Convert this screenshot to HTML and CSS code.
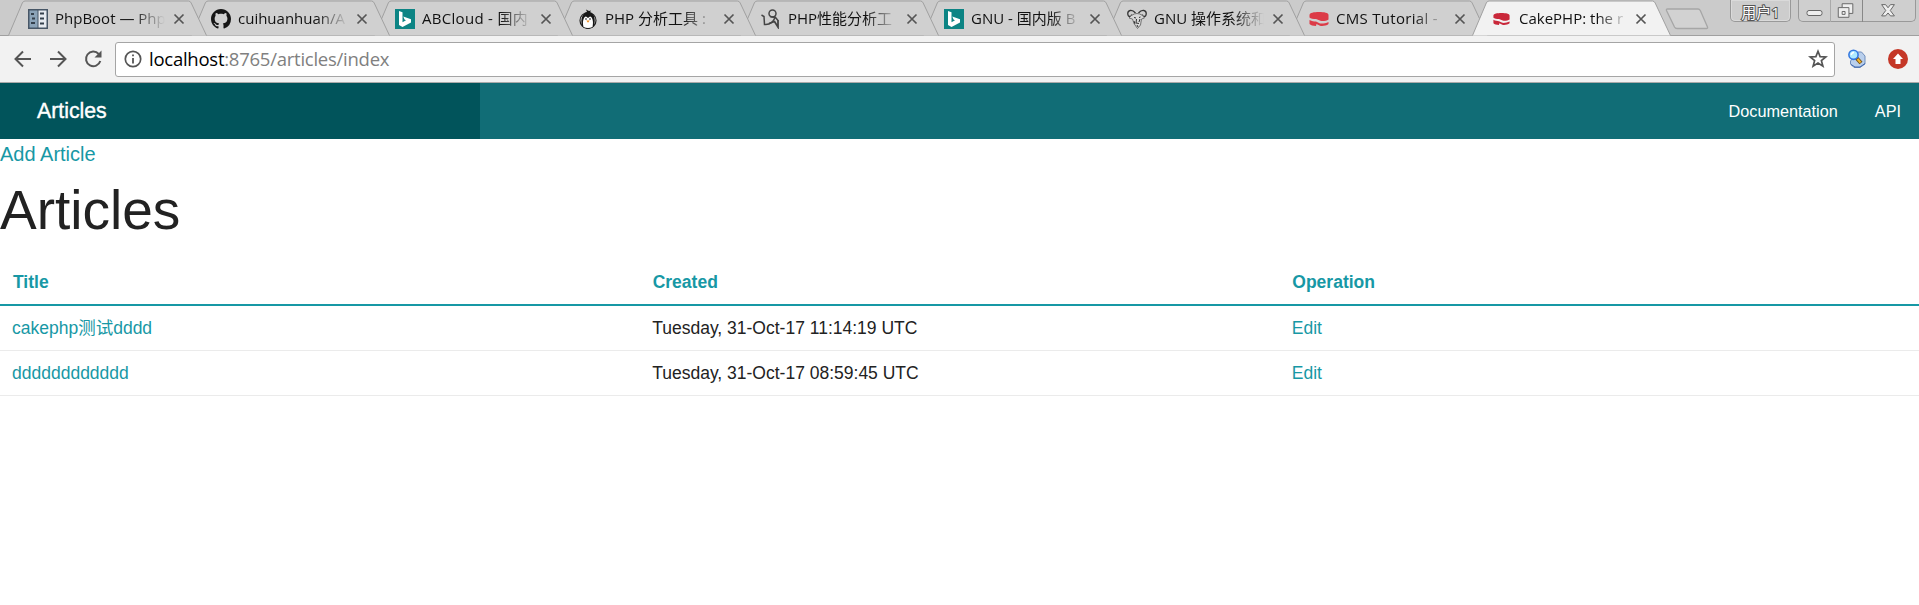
FILE: index.html
```html
<!DOCTYPE html>
<html lang="en">
<head>
<meta charset="utf-8">
<title>CakePHP: the rapid development php framework</title>
<link rel="stylesheet" href="styles.css">
</head>
<body>
<svg class="defs" width="0" height="0" aria-hidden="true">
  <symbol id="shape" viewBox="0 0 199 36"><path d="M.5 35.5 14.3 3Q15.2 1 17 1H180.500Q182.300 1 183.200 3L198.500 35.500" stroke="#a0a0a0"/></symbol>
  <symbol id="close" viewBox="0 0 12 12"><path d="M1.500 1.500 10.500 10.500M10.500 1.500 1.500 10.500" fill="none" stroke="#555" stroke-width="1.700"/></symbol>
  <symbol id="bing" viewBox="0 0 20 20"><path fill="#0c8484" d="M0 0H20V20H0Z"/><path fill="#fff" d="M4 2 7.500 3.300V13.300L11 11.300 9.500 10.500 8.300 7.500 16 10.300V13.500L7.500 18 4 16Z"/></symbol>
  <symbol id="cake" viewBox="0 0 20 16"><path d="M.5 4C.5 1.800 5 1 10 1S19.500 1.800 19.500 4V8.500C17.500 10 13.500 10.300 11.500 9.800L7 8C4.500 8 1.500 7.500 .5 6.500ZM.5 9C3 10.300 5 10.500 7 10.500L11 12.500C13.500 12.800 17 12.200 19.500 11V13C17.500 15 12.500 15.300 11 14.700L7.500 13 7 15C4 14.800 1.500 14.300 .5 13Z"/></symbol>
</svg>

<header class="tabstrip">
  <div class="tabs">
    <div class="tab"><svg class="shape"><use href="#shape"/></svg><div class="inner">
      <svg class="fav" viewBox="0 0 20 20"><path fill="#475666" d="M0 0H20V20H0Z"/><path fill="#8ba3b8" d="M1.500 1.500H9.500V18.500H1.500Z"/><path fill="#e6eaf0" d="M10.500 1.500H18.500V18.500H10.500Z"/><path d="M3 5H6M4 9.500H7M3 14H7M12 4.500H16M12 9.500H16M12 14.500H16" stroke="#34404c" stroke-width="2"/></svg>
      <span class="title">PhpBoot — Php</span><svg class="x"><use href="#close"/></svg></div></div>
    <div class="tab"><svg class="shape"><use href="#shape"/></svg><div class="inner">
      <svg class="fav" viewBox="0 0 16 16"><path fill="#161616" fill-rule="evenodd" d="M8 0C3.580 0 0 3.580 0 8c0 3.540 2.290 6.530 5.470 7.590.4.070.55-.17.55-.38 0-.19-.01-.82-.01-1.490-2.010.37-2.530-.49-2.690-.94-.09-.23-.48-.94-.82-1.130-.28-.15-.68-.52-.01-.53.63-.01 1.080.58 1.230.82.72 1.210 1.870.87 2.330.66.070-.52.28-.87.51-1.070-1.780-.2-3.640-.89-3.640-3.950 0-.87.31-1.590.82-2.150-.08-.2-.36-1.020.08-2.120 0 0 .67-.21 2.200.82.64-.18 1.320-.27 2-.27s1.360.09 2 .27c1.530-1.040 2.200-.82 2.200-.82.44 1.100.16 1.920.08 2.120.51.56.82 1.270.82 2.150 0 3.070-1.870 3.750-3.650 3.950.29.25.54.73.54 1.480 0 1.070-.01 1.930-.01 2.200 0 .21.15.46.55.38A8.010 8.010 0 0 0 16 8c0-4.420-3.580-8-8-8z"/></svg>
      <span class="title">cuihuanhuan/A</span><svg class="x"><use href="#close"/></svg></div></div>
    <div class="tab late"><svg class="shape"><use href="#shape"/></svg><div class="inner">
      <svg class="fav"><use href="#bing"/></svg>
      <span class="title wide">ABCloud - 国内</span><svg class="x"><use href="#close"/></svg></div></div>
    <div class="tab late"><svg class="shape"><use href="#shape"/></svg><div class="inner">
      <svg class="fav" viewBox="0 0 20 20"><circle cx="10" cy="11.500" r="8" fill="#eee" stroke="#222" stroke-width="1.200"/><path fill="#161616" d="M4 17C2 9 5 4 9 3L8 .5 11 2 13 1.500 12 3.200C16 4 18 10 16 17L14 19H6Z"/><path fill="#fff" d="M5.500 18C4 12 6 7.500 8 7.500L10 9 12 7.500C14 7.500 16 12 14.500 18Q10 20 5.500 18Z"/><circle cx="8" cy="10" r=".8"/><circle cx="12" cy="10" r=".8"/><path fill="#f28c1b" d="M8.300 11.500H11.700L10 13.800Z"/></svg>
      <span class="title">PHP 分析工具 :</span><svg class="x"><use href="#close"/></svg></div></div>
    <div class="tab late"><svg class="shape"><use href="#shape"/></svg><div class="inner">
      <svg class="fav" viewBox="0 0 20 20" fill="none" stroke="#444" stroke-width="1.500"><circle cx="11.500" cy="4.500" r="3.500"/><path d="M.5 6 3 7.500 3.500 15.500C8 16 12 14 14.500 7.500M9 7.500 14.500 8.500 17 11.500"/><path d="M8 14.500 13.500 12.500 17 18V11" stroke-width="1.800"/></svg>
      <span class="title">PHP性能分析工</span><svg class="x"><use href="#close"/></svg></div></div>
    <div class="tab late"><svg class="shape"><use href="#shape"/></svg><div class="inner">
      <svg class="fav"><use href="#bing"/></svg>
      <span class="title">GNU - 国内版 B</span><svg class="x"><use href="#close"/></svg></div></div>
    <div class="tab late"><svg class="shape"><use href="#shape"/></svg><div class="inner">
      <svg class="fav" viewBox="0 0 20 20" fill="none" stroke="#333" stroke-width="1.300"><path d="M8.500 4C5 0 .5 1 .8 5 1 8.500 5 8 4.500 5.500M11.500 4C15 0 19.500 1 19.200 5 19 8.500 15 8 15.500 5.500"/><path fill="#d8d8d8" stroke="#666" stroke-width=".9" d="M4.500 6.500Q10 2.500 15.500 6.500L17.500 9 14.500 10 13.500 16 10.500 19.500 7 14.500 5.500 10 2 9Z"/><path stroke-width="1" d="M7 8.500 9 9M12 8.500 13.500 8M9.500 10 9 14 12 14.500M10 16 11 18M7 12 8 15M13 10 12 13"/></svg>
      <span class="title">GNU 操作系统和</span><svg class="x"><use href="#close"/></svg></div></div>
    <div class="tab"><svg class="shape"><use href="#shape"/></svg><div class="inner">
      <svg class="fav cake"><use href="#cake"/></svg>
      <span class="title wide">CMS Tutorial -</span><svg class="x"><use href="#close"/></svg></div></div>
    <div class="tab active"><svg class="shape"><use href="#shape"/></svg><div class="inner">
      <svg class="fav cake small"><use href="#cake" width="17" height="14"/></svg>
      <span class="title">CakePHP: the r</span><svg class="x"><use href="#close"/></svg></div></div>
  </div>
  <svg class="newtab" viewBox="0 0 44 22"><path d="M2.500 1H33Q34.500 1 35.300 2.500L42.500 19Q43 20.500 41.500 20.500H12Q10.300 20.500 9.500 19L1.500 2.500Q1 1 2.500 1Z" fill="#d2d2d2" stroke="#a6a6a6" stroke-width="1.300"/></svg>
  <div class="user">用户1</div>
  <div class="controls">
    <svg class="min" viewBox="0 0 31 22"><rect x="8" y="10.500" width="15" height="5" rx="2" fill="#eee" stroke="#666"/></svg>
    <svg class="max" viewBox="0 0 32 22"><path d="M11.500 3.500H22.500V13.500H18.500V17.500H7.500V7.500H11.500Z" fill="#eee" stroke="#666"/><path d="M11.500 7.500H18.500V13.500M11.500 11.500H14.500V14.500H11.500Z" fill="none" stroke="#666"/></svg>
    <svg class="end" viewBox="0 0 53 22"><path d="M19 4.500H23L25.500 7.700 28 4.500H32L27.800 10.500 32 16H28L25.500 13 23 16H19L23.200 10.500Z" fill="#eee" stroke="#666"/></svg>
  </div>
</header>

<div class="toolbar">
  <svg class="nav" viewBox="0 0 20 20"><path d="M18 10H3M10 2.500 2.500 10 10 17.500"/></svg>
  <svg class="nav" viewBox="0 0 20 20"><path d="M2 10H17M10 2.500 17.500 10 10 17.500"/></svg>
  <svg class="nav" viewBox="0 0 20 20"><path d="M15.700 5A7.300 7.300 0 1 0 17.300 12"/><path class="solid" d="M18.500 1.500V8.500H11.500Z"/></svg>
  <div class="omnibox">
    <svg class="info" viewBox="0 0 18 18"><circle cx="9" cy="9" r="7.700" fill="none" stroke="#555" stroke-width="1.700"/><path d="M9 8V13.500M9 4.500V6.300" stroke="#555" stroke-width="1.800"/></svg>
    <span class="url"><b>localhost</b>:8765/articles/index</span>
    <svg class="star" viewBox="0 0 20 20"><path d="M10 2.300 12.100 7.600 17.800 8 13.400 11.600 14.900 17.200 10 14.100 5.100 17.200 6.600 11.600 2.200 8 7.900 7.600Z" fill="none" stroke="#555" stroke-width="1.700"/></svg>
  </div>
  <svg class="ext" viewBox="0 0 20 20"><path d="M11 3H14.500L18 7V15L13 18.500H7L3.500 15V12Z" fill="#b9cfec" stroke="#6f8dbb"/><path d="M4 15.500 8 18H13L18 14.500" fill="none" stroke="#4169b0"/><path d="M9.500 9 14 14" stroke="#765114" stroke-width="4"/><path d="M10.500 10 13.500 13.500" stroke="#f4b72c" stroke-width="2"/><circle cx="6.500" cy="5.800" r="4.600" fill="#aeeaff" stroke="#3478e0" stroke-width="1.600"/><path d="M4.200 6Q4.700 3.500 7 3.500" stroke="#fff" fill="none" stroke-width="1.300"/></svg>
  <svg class="red" viewBox="0 0 20 20"><circle cx="10" cy="10" r="10" fill="#c53727"/><path fill="#fff" d="M10 4.500 15 10H12.500V15H7.500V10H5Z"/></svg>
</div>

<nav class="topbar">
  <h1 class="name">Articles</h1>
  <a class="link">Documentation</a>
  <a class="link">API</a>
</nav>

<main>
  <a class="add">Add Article</a>
  <h1 class="heading">Articles</h1>
  <table>
    <thead><tr><th>Title</th><th>Created</th><th>Operation</th></tr></thead>
    <tbody>
      <tr><td><a>cakephp测试dddd</a></td><td>Tuesday, 31-Oct-17 11:14:19 UTC</td><td><a>Edit</a></td></tr>
      <tr><td><a>dddddddddddd</a></td><td>Tuesday, 31-Oct-17 08:59:45 UTC</td><td><a>Edit</a></td></tr>
    </tbody>
  </table>
</main>
</body>
</html>
```

FILE: styles.css
```css
* { box-sizing: border-box; }

body {
  margin: 0;
  background: #fff;
  color: #222;
  font-family: "Liberation Sans", "Noto Sans CJK SC", sans-serif;
  overflow: hidden;
}

svg { display: block; flex: none; }
.defs { display: none; }

/* Tab strip */
.tabstrip {
  display: flex;
  align-items: flex-start;
  height: 36px;
  padding-left: 8px;
  background: #cbcbcb;
  box-shadow: inset 0 -1px #a0a0a0;
}
.tabs { display: flex; }
.tab {
  display: grid;
  width: 199px;
  height: 36px;
  margin-right: -16px;
}
.tab > * { grid-area: 1 / 1; }
.tab:nth-child(1) { z-index: 8; }
.tab:nth-child(2) { z-index: 7; }
.tab:nth-child(3) { z-index: 6; }
.tab:nth-child(4) { z-index: 5; }
.tab:nth-child(5) { z-index: 4; }
.tab:nth-child(6) { z-index: 3; }
.tab:nth-child(7) { z-index: 2; }
.tab:nth-child(8) { z-index: 1; }
.tab.active { z-index: 9; }
.shape { width: 199px; height: 36px; fill: #d0d0d0; }
.active .shape { fill: #f2f2f2; }
.inner {
  display: flex;
  align-items: center;
  height: 38px;
  padding-left: 20px;
}
.late .inner { padding-left: 21px; }
.fav { width: 20px; height: 20px; }
.fav.cake { height: 16px; fill: #dc3b47; }
.fav.cake.small { width: 17px; height: 14px; margin: 0 2px 0 1px; fill: #c9283a; }
.title {
  width: 112px;
  margin: 0 6px 0 7px;
  white-space: nowrap;
  font: 15px/20px "Open Sans", "Noto Sans CJK SC", sans-serif;
  height: 22px;
  color: #111;
  -webkit-mask-image: linear-gradient(90deg, #000 78px, transparent 110px);
  mask-image: linear-gradient(90deg, #000 78px, transparent 110px);
}
.title.wide { letter-spacing: .3px; }
.x { width: 12px; height: 12px; }
.active .title { margin-right: 4px; }
.newtab { width: 44px; height: 22px; margin: 8px 0 0 10px; }

.user {
  width: 61px;
  height: 22px;
  margin-left: 21px;
  border: 1px solid #999;
  border-top: 0;
  border-radius: 0 0 5px 5px;
  background: #cdcdcd;
  box-shadow: inset 0 0 0 1px #dadada;
  color: #fff;
  font: 15px/24px "Open Sans", "Noto Sans CJK SC", sans-serif;
  text-align: center;
  -webkit-text-stroke: 2px #555;
  paint-order: stroke fill;
}
.controls {
  display: flex;
  height: 22px;
  margin-left: 7px;
  border: 1px solid #999;
  border-top: 0;
  border-radius: 0 0 5px 5px;
  background: #cfcfcf;
}
.min { width: 31px; height: 22px; }
.max { width: 32px; height: 22px; border-left: 1px solid #aaa; }
.end { width: 53px; height: 22px; border-left: 1px solid #888; }

/* Toolbar */
.toolbar {
  display: flex;
  align-items: center;
  height: 47px;
  padding: 0 11px 0 13px;
  background: #f2f2f2;
  border-bottom: 1px solid #aaa;
}
.nav { width: 20px; height: 20px; margin-right: 15px; fill: none; stroke: #555; stroke-width: 2; }
.nav .solid { fill: #555; stroke: none; }
.omnibox {
  display: flex;
  flex: 1;
  align-items: center;
  height: 35px;
  margin: 0 12px 0 -3px;
  padding: 0 6px 0 8px;
  border: 1px solid #a5a5a5;
  border-radius: 3px;
  background: #fff;
}
.info { width: 18px; height: 18px; margin-right: 7px; }
.url {
  flex: 1;
  height: 31px;
  color: #808080;
  font: 18.5px/29px "Open Sans", sans-serif;
  letter-spacing: -.25px;
}
.url b { color: #000; font-weight: 400; }
.star { width: 20px; height: 20px; }
.ext { width: 20px; height: 20px; margin-right: 21px; }
.red { width: 20px; height: 20px; }

/* Page header */
.topbar {
  display: flex;
  align-items: center;
  height: 56px;
  padding-right: 18px;
  background: #116d76;
  color: #fff;
}
.name {
  width: 480px;
  height: 56px;
  margin: 0 auto 0 0;
  padding-left: 37px;
  background: #01545b;
  font-size: 21.25px;
  font-weight: 400;
  line-height: 56px;
  -webkit-text-stroke: .4px #fff;
}
.link { margin-left: 37px; font-size: 16.25px; line-height: 56px; }

/* Content */
.add { display: block; color: #1798a5; font-size: 20px; line-height: 30px; }
.heading {
  margin: 3px 0 11px;
  font-size: 55px;
  font-weight: 400;
  line-height: 77px;
}
table { width: 100%; border-collapse: collapse; table-layout: fixed; font-size: 17.5px; }
th {
  height: 45px;
  padding: 1px 13px 0;
  border-bottom: 2px solid #1798a5;
  color: #1798a5;
  text-align: left;
}
td { height: 45px; padding: 0 12px; border-bottom: 1px solid #ebebeb; line-height: 22px; }
td:nth-child(3), td:nth-child(2) { padding-left: 12.5px; }
td a { color: #1798a5; }
```
